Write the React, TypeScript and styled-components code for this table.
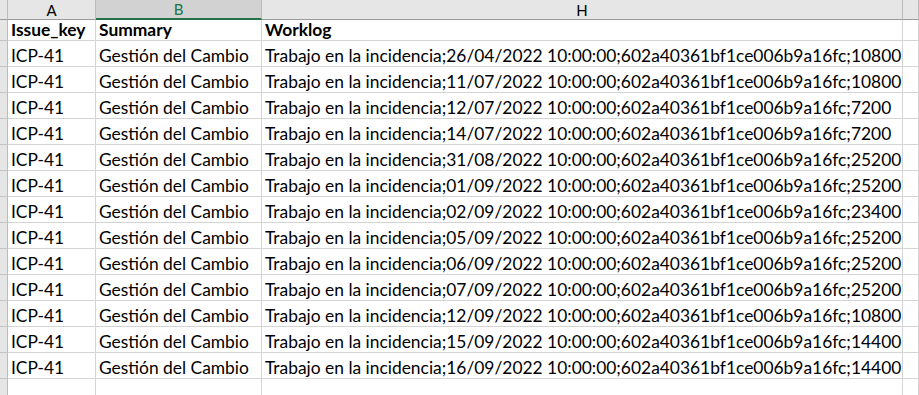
import styled, { createGlobalStyle } from 'styled-components'

const GlobalStyle = createGlobalStyle`
  html, body {
    margin: 0;
    padding: 0;
    background: #ffffff;
    overflow: hidden;
  }
`

const Sheet = styled.div`
  display: grid;
  grid-template-columns: 8px 88px 166px 641px 1fr;
  grid-template-rows: 20px 21px repeat(14, 26px);
  width: 919px;
  height: 395px;
  overflow: hidden;
  font-family: Lato, 'Liberation Sans', sans-serif;
  color: #000000;
`

const Corner = styled.div`
  background: #e6e6e6;
  border-right: 1px solid #bcbcbc;
  border-bottom: 1px solid #9b9b9b;
  box-sizing: border-box;
`

const ColHeader = styled.div<{ $selected?: boolean }>`
  background: ${(p) => (p.$selected ? '#d2d2d2' : '#e6e6e6')};
  color: ${(p) => (p.$selected ? '#217346' : '#000000')};
  border-right: 1px solid #bcbcbc;
  border-bottom: ${(p) => (p.$selected ? '2px solid #217346' : '1px solid #9b9b9b')};
  box-sizing: border-box;
  display: flex;
  align-items: center;
  justify-content: center;
  font-size: 15px;
  line-height: 16px;
`

const RowHead = styled.div`
  background: #e6e6e6;
  border-right: 1px solid #bcbcbc;
  border-bottom: 1px solid #c6c6c6;
  box-sizing: border-box;
`

const Cell = styled.div<{ $bold?: boolean }>`
  border-right: 1px solid #d4d4d4;
  border-bottom: 1px solid #d4d4d4;
  box-sizing: border-box;
  display: flex;
  align-items: flex-end;
  padding: 0 0 1px 3px;
  font-size: 17.4px;
  line-height: 19px;
  font-weight: ${(p) => (p.$bold ? 700 : 400)};
  white-space: nowrap;
`

const dates = [
  ['26/04/2022', '10800'],
  ['11/07/2022', '10800'],
  ['12/07/2022', '7200'],
  ['14/07/2022', '7200'],
  ['31/08/2022', '25200'],
  ['01/09/2022', '25200'],
  ['02/09/2022', '23400'],
  ['05/09/2022', '25200'],
  ['06/09/2022', '25200'],
  ['07/09/2022', '25200'],
  ['12/09/2022', '10800'],
  ['15/09/2022', '14400'],
  ['16/09/2022', '14400']
]

const Row = ({ date, secs }: { date: string; secs: string }) => (
  <>
    <RowHead />
    <Cell>ICP-41</Cell>
    <Cell>Gestión del Cambio</Cell>
    <Cell>{`Trabajo en la incidencia;${date} 10:00:00;602a40361bf1ce006b9a16fc;${secs}`}</Cell>
    <Cell />
  </>
)

export default function App() {
  return (
    <>
      <GlobalStyle />
      <Sheet>
        <Corner />
        <ColHeader>A</ColHeader>
        <ColHeader $selected>B</ColHeader>
        <ColHeader>H</ColHeader>
        <ColHeader />

        <RowHead />
        <Cell $bold>Issue_key</Cell>
        <Cell $bold>Summary</Cell>
        <Cell $bold>Worklog</Cell>
        <Cell />

        {dates.map(([date, secs]) => (
          <Row key={date} date={date} secs={secs} />
        ))}

        <RowHead />
        <Cell />
        <Cell />
        <Cell />
        <Cell />
      </Sheet>
    </>
  )
}
